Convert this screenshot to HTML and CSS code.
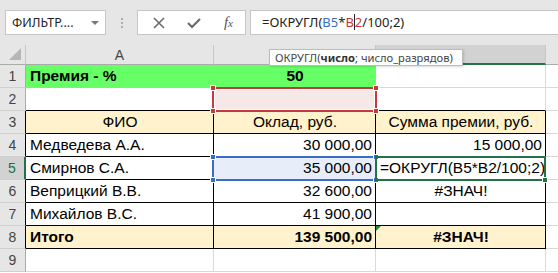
FILE: index.html
```html
<!DOCTYPE html>
<html lang="ru">
<head>
    <meta charset="UTF-8">
    <title>Премия - ОКРУГЛ</title>
    <link rel="stylesheet" href="styles.css">
</head>
<body>
    <div class="toolbar">
        <div class="name-box">
            <span>ФИЛЬТР....</span>
            <span class="arrow"></span>
        </div>
        <div class="grip"><i></i><i></i><i></i></div>
        <div class="fx-box">
            <svg width="12" height="12" viewBox="0 0 12 12"><path d="M1 1 L11 11 M11 1 L1 11" stroke="#6b6b6b" stroke-width="1.6" fill="none"/></svg>
            <svg width="14" height="12" viewBox="0 0 14 12"><path d="M1 6 L5 10 L13 2" stroke="#6b6b6b" stroke-width="2.2" fill="none"/></svg>
            <span class="fx">f<small>x</small></span>
        </div>
        <div class="formula">=ОКРУГЛ(<span class="ref-blue">B5</span>*<span class="ref-red">B</span><span class="caret"></span><span class="ref-red">2</span>/100;2)</div>
    </div>

    <div class="sheet">
        <!-- column headers (B and C sit under the tooltip) -->
        <div class="c ch corner"><span class="tri"></span></div>
        <div class="c ch">A</div>
        <div class="c ch"></div>
        <div class="c ch ch-sel"></div>
        <div class="c ch last"></div>

        <!-- 1 -->
        <div class="c rh">1</div>
        <div class="c green b">Премия - %</div>
        <div class="c green b m">50</div>
        <div class="c"></div>
        <div class="c last"></div>

        <!-- 2 -->
        <div class="c rh">2</div>
        <div class="c tb"></div>
        <div class="c tb"></div>
        <div class="c tb"></div>
        <div class="c last"></div>

        <!-- 3 -->
        <div class="c rh rh-t">3</div>
        <div class="c t head m">ФИО</div>
        <div class="c t head m">Оклад, руб.</div>
        <div class="c t head m">Сумма премии, руб.</div>
        <div class="c last"></div>

        <!-- 4 -->
        <div class="c rh rh-t">4</div>
        <div class="c t">Медведева А.А.</div>
        <div class="c t r">30 000,00</div>
        <div class="c t r">15 000,00</div>
        <div class="c last"></div>

        <!-- 5 -->
        <div class="c rh rh-sel">5</div>
        <div class="c t">Смирнов С.А.</div>
        <div class="c t r sel-blue-bg">35 000,00</div>
        <div class="c t">=ОКРУГЛ(B5*B2/100;2)</div>
        <div class="c last"></div>

        <!-- 6 -->
        <div class="c rh rh-t">6</div>
        <div class="c t">Веприцкий В.В.</div>
        <div class="c t r">32 600,00</div>
        <div class="c t m">#ЗНАЧ!</div>
        <div class="c last"></div>

        <!-- 7 -->
        <div class="c rh rh-t">7</div>
        <div class="c t">Михайлов В.С.</div>
        <div class="c t r">41 900,00</div>
        <div class="c t"></div>
        <div class="c last"></div>

        <!-- 8 -->
        <div class="c rh rh-t">8</div>
        <div class="c t head b">Итого</div>
        <div class="c t head b r">139 500,00</div>
        <div class="c t head b m">#ЗНАЧ!</div>
        <div class="c last"></div>

        <!-- 9 -->
        <div class="c rh">9</div>
        <div class="c"></div>
        <div class="c"></div>
        <div class="c"></div>
        <div class="c last"></div>

        <!-- overlays -->
        <div class="frame frame-red"><i class="h tl"></i><i class="h tr"></i><i class="h bl"></i><i class="h br"></i></div>
        <div class="frame frame-blue"><i class="h tl"></i><i class="h tr"></i><i class="h bl"></i><i class="h br"></i></div>
        <div class="frame frame-green"><i class="h br"></i></div>
        <div class="err-mark"></div>
        <div class="tooltip">ОКРУГЛ(<b>число</b>; число_разрядов)</div>
    </div>
</body>
</html>
```

FILE: styles.css
```css
* {
    box-sizing: border-box;
}
body {
    margin: 0;
    background-color: #fff;
    font-family: "Liberation Sans", Arial, sans-serif;
    overflow: hidden;
}

/* formula bar */
.toolbar {
    height: 45px;
    background-color: #e6e6e6;
    display: flex;
    align-items: flex-start;
    padding: 10px 0 0 5px;
    font-family: "Noto Sans", sans-serif;
}
.name-box {
    width: 101px;
    height: 25px;
    background-color: #fff;
    border: 1px solid #c6c6c6;
    display: flex;
    align-items: center;
    justify-content: space-between;
    padding: 0 6px 0 6px;
    font-size: 12.5px;
    color: #222;
}
.arrow {
    width: 0;
    height: 0;
    border-left: 4px solid transparent;
    border-right: 4px solid transparent;
    border-top: 4px solid #777;
}
.grip {
    width: 31px;
    height: 25px;
    display: flex;
    flex-direction: column;
    align-items: center;
    justify-content: center;
    gap: 2px;
}
.grip i {
    width: 2px;
    height: 2px;
    background-color: #adadad;
}
.fx-box {
    width: 109px;
    height: 25px;
    background-color: #fff;
    border: 1px solid #c6c6c6;
    display: flex;
    align-items: center;
    justify-content: space-between;
    padding: 0 12px 0 15px;
}
.fx {
    font-family: "Liberation Serif", serif;
    font-style: italic;
    font-size: 15px;
    color: #555;
}
.fx small {
    font-size: 11px;
}
.formula {
    flex: 1;
    height: 25px;
    margin-left: 4px;
    background-color: #fff;
    border: 1px solid #c6c6c6;
    border-right: none;
    padding-left: 11px;
    font-size: 13px;
    line-height: 22px;
    color: #222;
    white-space: nowrap;
}
.ref-blue {
    color: #3a6cc6;
}
.ref-red {
    color: #c4383e;
}
.caret {
    display: inline-block;
    width: 1px;
    height: 16px;
    background-color: #222;
    vertical-align: -3px;
}

/* grid */
.sheet {
    position: relative;
    display: grid;
    grid-template-columns: 26px 188px 162px 170px 1fr;
    grid-template-rows: 20px repeat(9, 23px);
}
.c {
    border-right: 1px solid #d9d9d9;
    border-bottom: 1px solid #d9d9d9;
    display: flex;
    align-items: flex-end;
    padding: 0 3px 1px 4px;
    font-size: 15.5px;
    line-height: 20px;
    color: #000;
    white-space: nowrap;
}
.c.last {
    border-right: none;
}
.ch {
    background-color: #e6e6e6;
    border-right: 1px solid #c6c6c6;
    border-bottom: 1px solid #ababab;
    justify-content: center;
    align-items: center;
    font-size: 14px;
    color: #444;
    padding: 0;
}
.ch-sel {
    background-color: #d2d2d2;
    border-bottom: 2px solid #217346;
}
.corner {
    position: relative;
}
.tri {
    position: absolute;
    right: 4px;
    bottom: 4px;
    width: 0;
    height: 0;
    border-left: 12px solid transparent;
    border-bottom: 12px solid #b5b5b5;
}
.rh {
    background-color: #e6e6e6;
    border-right: 1px solid #ababab;
    border-bottom: 1px solid #d0d0d0;
    justify-content: center;
    align-items: center;
    font-size: 14px;
    color: #444;
    padding: 0;
}
.rh-t {
    border-right-color: #000;
}
.rh-sel {
    background-color: #d2d2d2;
    border-right: 2px solid #217346;
    color: #217346;
}

.green {
    background-color: #66ff66;
    border-right-color: #66ff66;
    border-bottom-color: #66ff66;
}
.tb {
    border-bottom-color: #000;
}
.t {
    border-right-color: #000;
    border-bottom-color: #000;
}
.head {
    background-color: #fff2cc;
}
.b {
    font-weight: bold;
}
.r {
    justify-content: flex-end;
}
.m {
    justify-content: center;
}
.sel-blue-bg {
    background-color: #e8eef9;
}

/* selection frames */
.frame {
    position: absolute;
    border: 2px solid;
    box-shadow: inset 0 0 0 1px #fff;
}
.frame-red {
    left: 212px;
    top: 42px;
    width: 165px;
    height: 25px;
    border-color: #c4383e;
    background-color: #f7e8e8;
}
.frame-blue {
    left: 212px;
    top: 111px;
    width: 165px;
    height: 25px;
    border-color: #3a6cc6;
    box-shadow: none;
}
.frame-green {
    left: 375px;
    top: 111px;
    width: 171px;
    height: 25px;
    border-color: #217346;
    box-shadow: none;
}
.h {
    position: absolute;
    width: 6px;
    height: 6px;
    border: 1px solid #fff;
}
.frame-red .h {
    background-color: #c4383e;
}
.frame-blue .h {
    background-color: #3a6cc6;
}
.frame-green .h {
    background-color: #217346;
}
.h.tl { left: -4px; top: -4px; }
.h.tr { right: -4px; top: -4px; }
.h.bl { left: -4px; bottom: -4px; }
.h.br { right: -4px; bottom: -4px; }

.err-mark {
    position: absolute;
    left: 376px;
    top: 181px;
    width: 0;
    height: 0;
    border-top: 5px solid #1e8a3c;
    border-right: 5px solid transparent;
}
.tooltip {
    position: absolute;
    left: 269px;
    top: 4px;
    width: 194px;
    height: 17px;
    background-color: #fff;
    border: 1px solid #bcbcbc;
    box-shadow: 1px 1px 2px rgba(0, 0, 0, 0.15);
    font-family: "Noto Sans", sans-serif;
    font-size: 11.2px;
    line-height: 15px;
    color: #444;
    padding-left: 5px;
    white-space: nowrap;
}
.tooltip b {
    color: #333;
}
```
